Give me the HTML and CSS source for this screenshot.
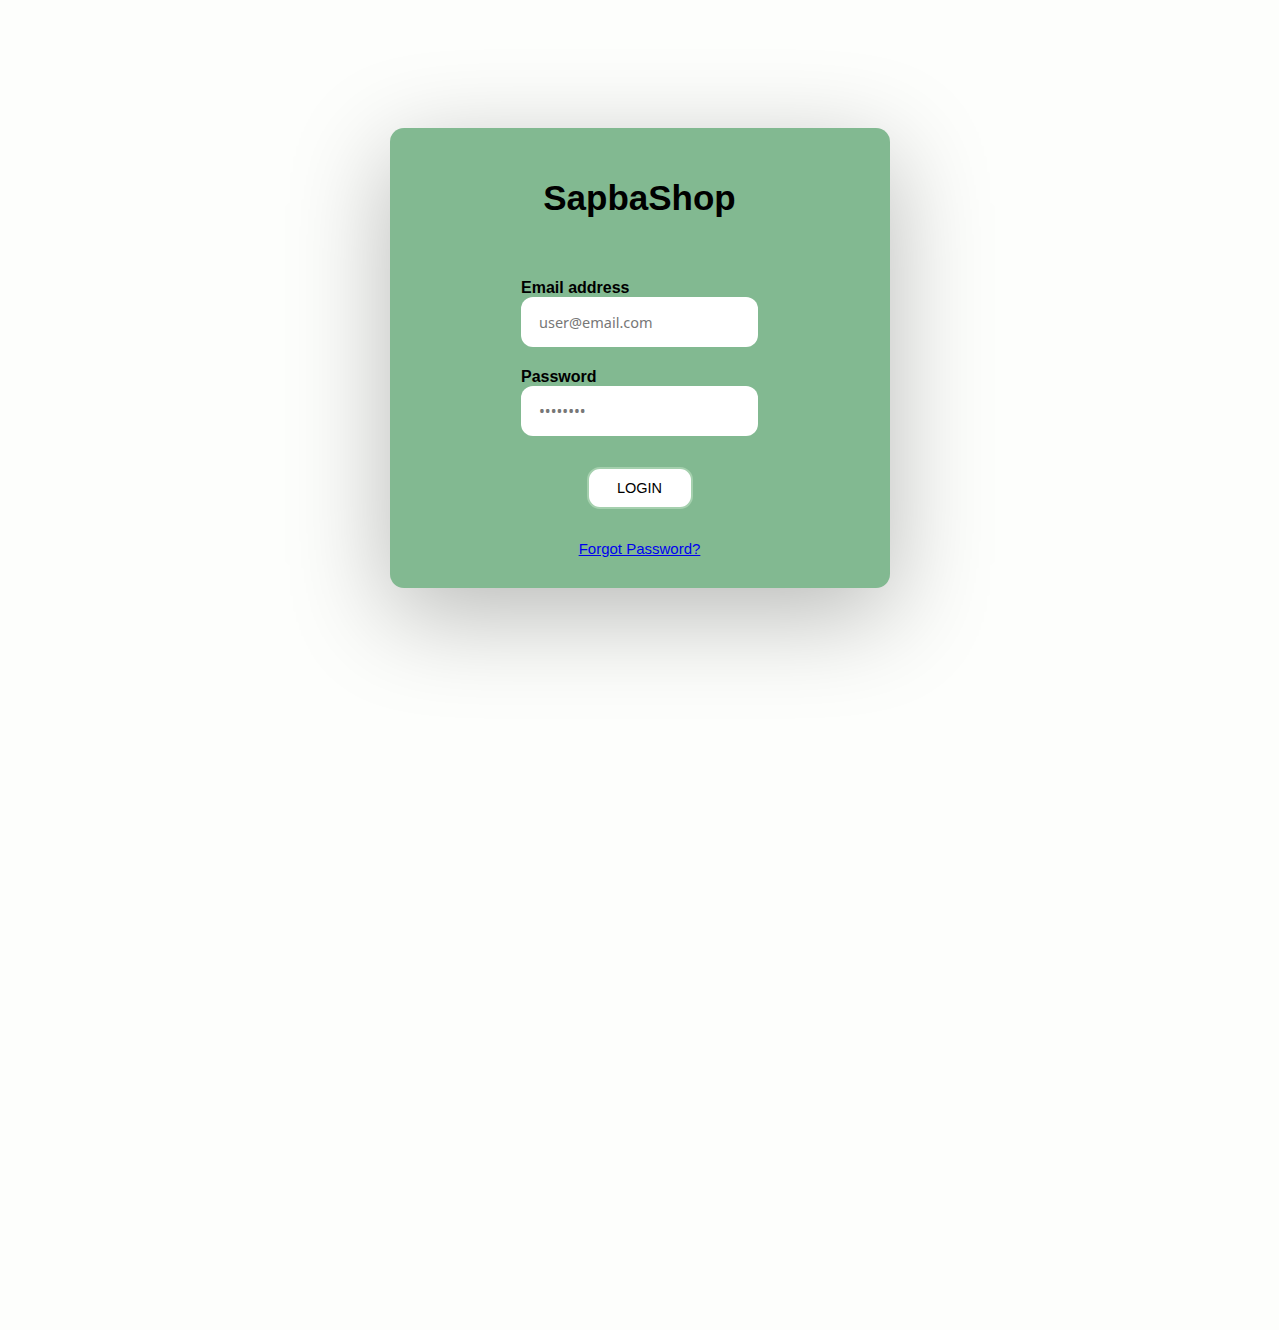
FILE: index.html
```html
<!DOCTYPE html>
<html lang="en">
<head>
<meta charset="utf-8">
<title>SapbaShop - Login</title>
<link rel="stylesheet" href="styles.css">
</head>
<body>
<main class="page">
  <div class="card">
    <h1 class="title">SapbaShop</h1>
    <form class="form" onsubmit="return false">
      <div class="field">
        <label class="label" for="email">Email address</label>
        <input class="input" id="email" type="email" placeholder="user@email.com">
      </div>
      <div class="field">
        <label class="label" for="password">Password</label>
        <input class="input input-pass" id="password" type="password" placeholder="••••••••">
      </div>
      <div class="actions">
        <button class="btn" type="submit">LOGIN</button>
      </div>
      <a class="forgot" href="#">Forgot Password?</a>
    </form>
  </div>
</main>
</body>
</html>
```

FILE: styles.css
```css
html, body {
  margin: 0;
  padding: 0;
  background: #fdfefc;
  font-family: "Liberation Sans", Arial, sans-serif;
}

body {
  min-height: 1330px;
}

.page {
  display: flex;
  justify-content: center;
  padding-top: 128px;
  padding-bottom: 200px;
}

.card {
  width: 500px;
  height: 460px;
  box-sizing: border-box;
  background: #82b991;
  border-radius: 14px;
  box-shadow: 0 26px 100px rgba(0, 0, 0, 0.28);
  padding-top: 50px;
  display: flex;
  flex-direction: column;
  align-items: center;
}

.title {
  margin: 0;
  font-size: 35px;
  line-height: 40px;
  font-weight: bold;
  color: #000;
}

.form {
  margin-top: 61px;
  width: 237px;
  display: flex;
  flex-direction: column;
}

.field {
  display: flex;
  flex-direction: column;
  margin-bottom: 21px;
}

.field + .field {
  margin-bottom: 31px;
}

.label {
  font-size: 16px;
  line-height: 18px;
  font-weight: bold;
  color: #000;
}

.input {
  height: 50px;
  box-sizing: border-box;
  border: none;
  border-radius: 12px;
  background: #fff;
  padding: 0 17px 0 18px;
  font-family: "Noto Sans", sans-serif;
  font-size: 14.5px;
  color: #333;
  outline: none;
}

.input-pass {
  font-size: 15.5px;
}

.input::placeholder {
  color: #777;
}

.actions {
  display: flex;
  justify-content: center;
}

.btn {
  width: 106px;
  height: 42px;
  box-sizing: border-box;
  background: #fff;
  border: 2px solid #a5d0ae;
  border-radius: 13px;
  font-family: "Liberation Sans", Arial, sans-serif;
  font-size: 14.5px;
  color: #000;
  cursor: pointer;
}

.forgot {
  margin-top: 31px;
  align-self: center;
  font-size: 15px;
  line-height: 17px;
  color: #0000ee;
  text-decoration: underline;
}
```
